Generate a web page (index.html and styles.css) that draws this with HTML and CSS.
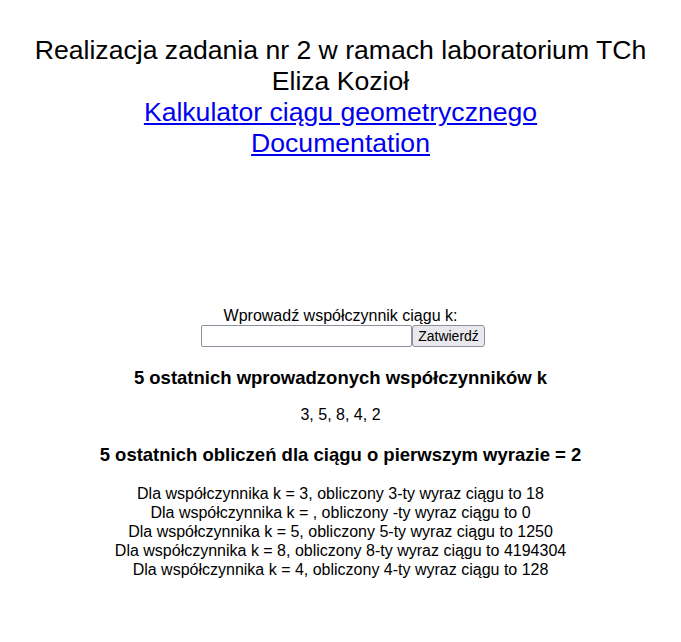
FILE: index.html
```html
<!DOCTYPE html>
<html lang="pl">
<head>
<meta charset="utf-8">
<title>Kalkulator ciągu geometrycznego</title>
<link rel="stylesheet" href="styles.css">
</head>
<body>
<div class="header">
  <div>Realizacja zadania nr 2 w ramach laboratorium TCh</div>
  <div>Eliza Kozioł</div>
  <div><a href="#">Kalkulator ciągu geometrycznego</a></div>
  <div><a href="#">Documentation</a></div>
</div>
<form class="form">
  <label class="label" for="k">Wprowadź współczynnik ciągu k:</label>
  <div class="row"><input class="input" id="k" type="text"><button class="btn" type="button">Zatwierdź</button></div>
</form>
<h3 class="title">5 ostatnich wprowadzonych współczynników k</h3>
<p class="nums">3, 5, 8, 4, 2</p>
<h3 class="title title2">5 ostatnich obliczeń dla ciągu o pierwszym wyrazie = 2</h3>
<div class="results">
  <div>Dla współczynnika k = 3, obliczony 3-ty wyraz ciągu to 18</div>
  <div>Dla współczynnika k = , obliczony -ty wyraz ciągu to 0</div>
  <div>Dla współczynnika k = 5, obliczony 5-ty wyraz ciągu to 1250</div>
  <div>Dla współczynnika k = 8, obliczony 8-ty wyraz ciągu to 4194304</div>
  <div>Dla współczynnika k = 4, obliczony 4-ty wyraz ciągu to 128</div>
</div>
</body>
</html>
```
FILE: styles.css
```css
body {
  margin: 0;
  font-family: "Liberation Sans", Arial, sans-serif;
  text-align: center;
  color: #000;
  background: #fff;
}
.header {
  padding-top: 35px;
  font-size: 26.6px;
  line-height: 31px;
}
.header a {
  color: #0000ee;
}
.form {
  margin-top: 147px;
  font-size: 16px;
  line-height: 19px;
}
.label {
  display: block;
}
.row {
  display: flex;
  justify-content: center;
  align-items: center;
  height: 22px;
  padding-left: 5px;
}
.input {
  box-sizing: border-box;
  width: 211px;
  height: 22px;
  border: 1px solid #8f8f9d;
  border-radius: 2px;
  margin: 0;
}
.btn {
  box-sizing: border-box;
  height: 22px;
  width: 73px;
  padding: 0 3px;
  margin: 0;
  font-family: "Liberation Sans", Arial, sans-serif;
  font-size: 14px;
  background: #e9e9ed;
  border: 1px solid #8f8f9d;
  border-radius: 3px;
  color: #000;
}
.title {
  margin: 20px 0 0;
  font-size: 18.5px;
  line-height: 22px;
  font-weight: bold;
}
.nums {
  margin: 16px 0 0;
  font-size: 16px;
  line-height: 19px;
}
.title2 {
  margin-top: 20px;
}
.results {
  margin-top: 18px;
  font-size: 16px;
  line-height: 19px;
}
```
